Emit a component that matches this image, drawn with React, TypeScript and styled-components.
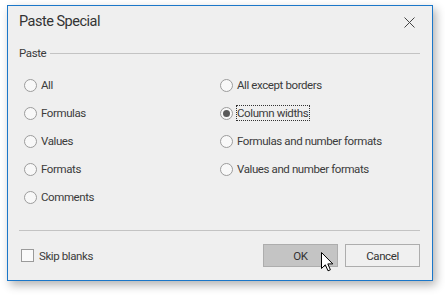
import styled, { createGlobalStyle } from "styled-components";

const GlobalStyle = createGlobalStyle`
    body {
        margin: 0;
        background: #fff;
        font-family: Roboto, "Noto Sans", sans-serif;
    }
`;

const Page = styled.div`
    width: 445px;
    height: 295px;
    padding: 5px 0 0 7px;
    box-sizing: border-box;
`;

const Dialog = styled.div`
    position: relative;
    width: 426px;
    height: 276px;
    box-sizing: border-box;
    border: 1px solid #1b77c9;
    background: #efefef;
    box-shadow: 3px 4px 9px rgba(0, 0, 0, 0.3);
    display: flex;
    flex-direction: column;
    color: #3b3b3b;
    font-size: 11.5px;
    letter-spacing: -0.4px;
`;

const TitleBar = styled.div`
    height: 31px;
    padding: 0 17px 0 11px;
    display: flex;
    align-items: center;
    justify-content: space-between;
`;

const Title = styled.div`
    font-size: 14.5px;
    color: #333;
    letter-spacing: -0.5px;
`;

const CloseButton = styled.div`
    width: 11px;
    height: 11px;
    display: flex;
    margin-top: 1px;
`;

const Body = styled.div`
    flex: 1;
    padding: 0 12px 0 11px;
    display: flex;
    flex-direction: column;
`;

const GroupHeader = styled.div`
    margin-top: 8px;
    height: 16px;
    display: flex;
    align-items: center;
    gap: 4px;
`;

const GroupLine = styled.div`
    flex: 1;
    height: 1px;
    background: #c3c3c3;
`;

const Options = styled.div`
    margin-top: 10px;
    padding-left: 5px;
    display: grid;
    grid-template-columns: 196px 1fr;
    grid-template-rows: repeat(5, 28px);
    grid-auto-flow: column;
`;

const Option = styled.label`
    display: flex;
    align-items: center;
    gap: 4px;
    white-space: nowrap;
`;

const Radio = styled.span<{ $checked?: boolean }>`
    width: 13px;
    height: 13px;
    box-sizing: border-box;
    border-radius: 50%;
    border: 1px solid #9c9c9c;
    background: #f8f8f8;
    display: flex;
    align-items: center;
    justify-content: center;
    flex-shrink: 0;

    &::after {
        content: "";
        display: ${p => (p.$checked ? "block" : "none")};
        width: 7px;
        height: 7px;
        border-radius: 50%;
        background: #5a5a5a;
    }
`;

const OptionText = styled.span<{ $focused?: boolean }>`
    padding: 1px 2px 1px 1px;
    margin-left: -1px;
    outline: ${p => (p.$focused ? "1px dotted #333" : "none")};
    outline-offset: -1px;
    line-height: 14px;
`;

const Separator = styled.div`
    margin-top: 19px;
    height: 1px;
    background: #c3c3c3;
`;

const Footer = styled.div`
    margin-top: 13px;
    display: flex;
    align-items: center;
`;

const CheckRow = styled.label`
    display: flex;
    align-items: center;
    gap: 5px;
    padding-left: 2px;
    flex: 1;
`;

const CheckBox = styled.span`
    width: 13px;
    height: 13px;
    box-sizing: border-box;
    border: 1px solid #9a9a9a;
    background: #fafafa;
`;

const Buttons = styled.div`
    display: flex;
    gap: 7px;
`;

const Button = styled.div<{ $hover?: boolean }>`
    position: relative;
    width: 75px;
    height: 23px;
    box-sizing: border-box;
    border: 1px solid #adadad;
    background: ${p => (p.$hover ? "#c4c4c4" : "#f0f0f0")};
    display: flex;
    align-items: center;
    justify-content: center;
    color: #333;
`;

const Cursor = styled.svg`
    position: absolute;
    left: 57px;
    top: 7px;
`;

const leftOptions = ["All", "Formulas", "Values", "Formats", "Comments"];
const rightOptions = [
    "All except borders",
    "Column widths",
    "Formulas and number formats",
    "Values and number formats",
];

export default function App() {
    const selected = "Column widths";

    return (
        <Page>
            <GlobalStyle />
            <Dialog>
                <TitleBar>
                    <Title>Paste Special</Title>
                    <CloseButton>
                        <svg width="11" height="11" viewBox="0 0 11 11">
                            <path d="M0.5 0.5 L10.5 10.5 M10.5 0.5 L0.5 10.5" stroke="#444" strokeWidth="1" />
                        </svg>
                    </CloseButton>
                </TitleBar>
                <Body>
                    <GroupHeader>
                        <span>Paste</span>
                        <GroupLine />
                    </GroupHeader>
                    <Options>
                        {leftOptions.map(o => (
                            <Option key={o}>
                                <Radio />
                                <OptionText>{o}</OptionText>
                            </Option>
                        ))}
                        {rightOptions.map(o => (
                            <Option key={o}>
                                <Radio $checked={o === selected} />
                                <OptionText $focused={o === selected}>{o}</OptionText>
                            </Option>
                        ))}
                    </Options>
                    <Separator />
                    <Footer>
                        <CheckRow>
                            <CheckBox />
                            <span>Skip blanks</span>
                        </CheckRow>
                        <Buttons>
                            <Button $hover>
                                OK
                                <Cursor width="13" height="20" viewBox="0 0 13 20">
                                    <path
                                        d="M0.5 0.5 L0.5 16.5 L4.3 12.8 L7 18.8 L9.4 17.8 L6.8 11.9 L11.8 11.9 Z"
                                        fill="#fff"
                                        stroke="#000"
                                        strokeWidth="1"
                                        strokeLinejoin="miter"
                                    />
                                </Cursor>
                            </Button>
                            <Button>Cancel</Button>
                        </Buttons>
                    </Footer>
                </Body>
            </Dialog>
        </Page>
    );
}
